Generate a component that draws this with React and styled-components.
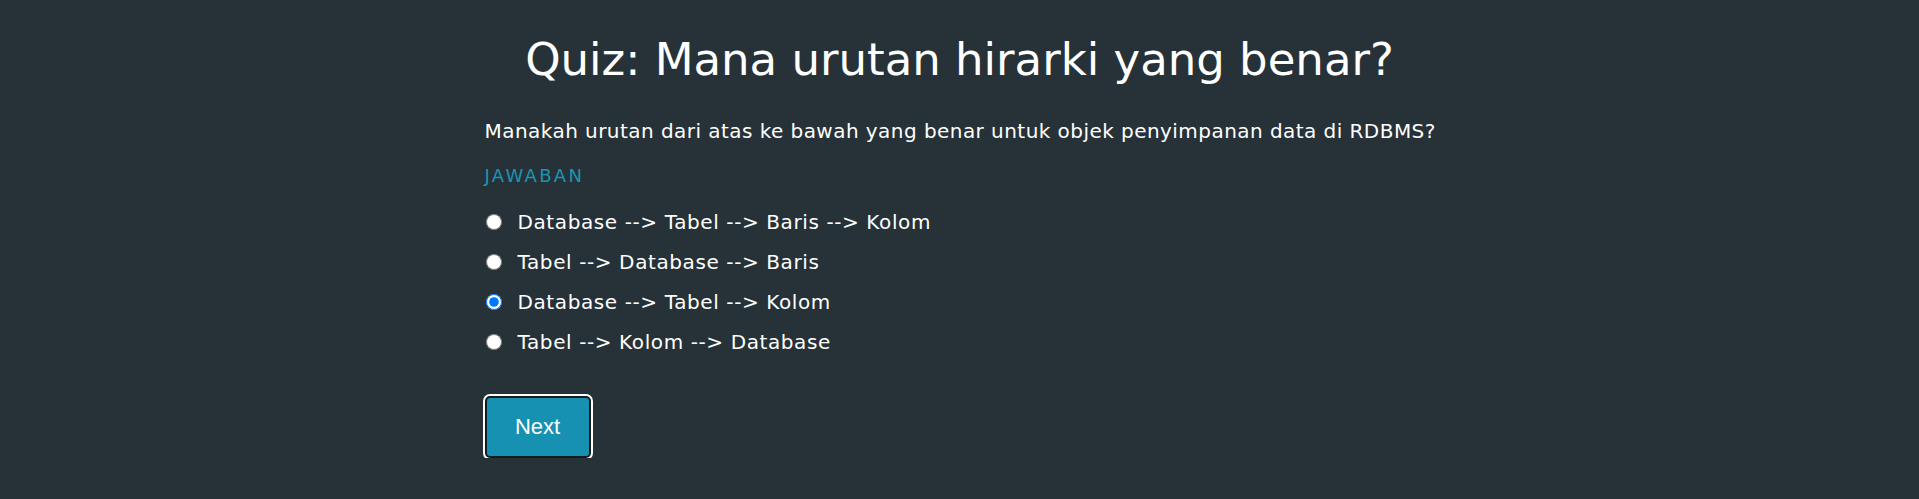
import React from 'react'
import styled, { createGlobalStyle } from 'styled-components'

const GlobalStyle = createGlobalStyle`
  body {
    margin: 0;
    background: #263238;
    color: #fff;
    font-family: 'DejaVu Sans', 'Open Sans', sans-serif;
  }
`

const QuizContainer = styled.div`
  max-width: 950px;
  margin: 0 auto;
  padding-top: 28px;
`

const Title = styled.h1`
  font-size: 45px;
  font-weight: 500;
  text-align: center;
  margin: 0 0 25px;
  line-height: 64px;
`

const Question = styled.p`
  font-size: 20px;
  letter-spacing: 0.45px;
  white-space: nowrap;
  margin: 0;
  line-height: 28px;
`

const AnswerLabel = styled.h3`
  color: #1b95b3;
  font-size: 18px;
  font-weight: 400;
  letter-spacing: 2.3px;
  margin: 19px 0 20px;
  line-height: 24px;
`

const OptionList = styled.div`
  display: flex;
  flex-direction: column;
  gap: 12px;
`

const OptionRow = styled.label`
  display: flex;
  align-items: center;
  gap: 16px;
  font-size: 20px;
  letter-spacing: 0.6px;
  line-height: 28px;
  cursor: pointer;
`

const Radio = styled.input`
  width: 16px;
  height: 16px;
  margin: 0 0 0 1px;
`

const NextButton = styled.button`
  margin-top: 40px;
  width: 106px;
  height: 62px;
  background: #1791b1;
  color: #fff;
  border: 2px solid #141b1f;
  border-radius: 5px;
  box-shadow: 0 0 0 2px #fff;
  font-family: 'Liberation Sans', Arial, sans-serif;
  font-size: 22px;
  cursor: pointer;
`

const options = [
  'Database --> Tabel --> Baris --> Kolom',
  'Tabel --> Database --> Baris',
  'Database --> Tabel --> Kolom',
  'Tabel --> Kolom --> Database',
]

const App = () => (
  <>
    <GlobalStyle />
    <QuizContainer>
      <Title>Quiz: Mana urutan hirarki yang benar?</Title>
      <Question>
        Manakah urutan dari atas ke bawah yang benar untuk objek penyimpanan data di RDBMS?
      </Question>
      <AnswerLabel>JAWABAN</AnswerLabel>
      <OptionList>
        {options.map((option, i) => (
          <OptionRow key={option}>
            <Radio type="radio" name="answer" defaultChecked={i === 2} />
            {option}
          </OptionRow>
        ))}
      </OptionList>
      <NextButton>Next</NextButton>
    </QuizContainer>
  </>
)

export default App
